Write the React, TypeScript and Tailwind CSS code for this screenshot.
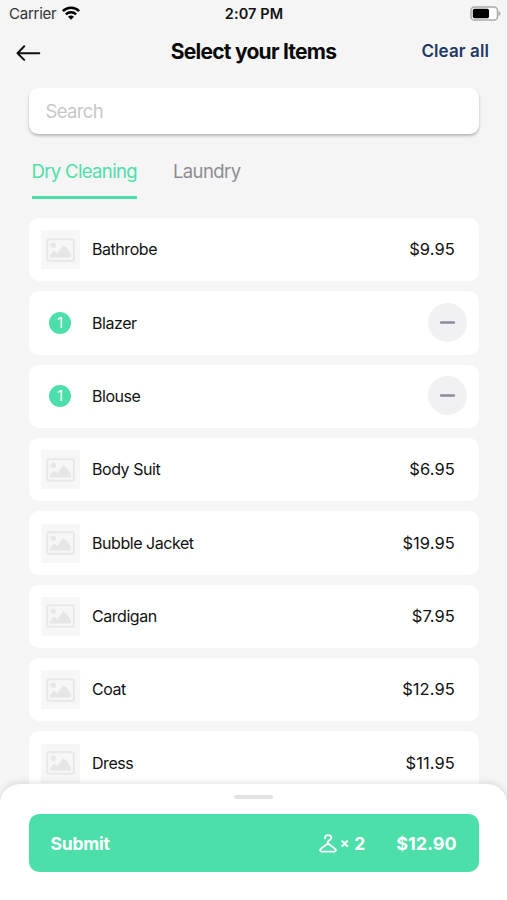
import React from 'react';

type Item = { name: string; price: string; count?: number };

const items: Item[] = [
  { name: 'Bathrobe', price: '$9.95' },
  { name: 'Blazer', price: '$9.95', count: 1 },
  { name: 'Blouse', price: '$6.95', count: 1 },
  { name: 'Body Suit', price: '$6.95' },
  { name: 'Bubble Jacket', price: '$19.95' },
  { name: 'Cardigan', price: '$7.95' },
  { name: 'Coat', price: '$12.95' },
  { name: 'Dress', price: '$11.95' },
];

function WifiIcon() {
  return (
    <svg width="18" height="14" viewBox="0 0 18 14" fill="none" stroke="#000" strokeWidth="2.5" className="-mt-[2px]">
      <path d="M0.9 5.2a11.4 11.4 0 0 1 16.2 0" />
      <path d="M3.9 8.4a7.2 7.2 0 0 1 10.2 0" />
      <path d="M9 13.8 6 10.8a4.2 4.2 0 0 1 6 0Z" fill="#000" stroke="none" />
    </svg>
  );
}

function BatteryIcon() {
  return (
    <svg width="31" height="15" viewBox="0 0 31 15" fill="none" className="-mt-[2px]">
      <rect x="1" y="1" width="26.5" height="13" rx="3.6" fill="#fff" stroke="#a9a9a9" strokeWidth="1.5" />
      <rect x="2.8" y="2.8" width="16.2" height="9.4" rx="1.6" fill="#000" />
      <path d="M28.6 5.2c1.2.4 1.9 1.2 1.9 2.3s-.7 1.9-1.9 2.3Z" fill="#a9a9a9" />
    </svg>
  );
}

function BackArrow() {
  return (
    <svg width="25" height="16" viewBox="0 0 25 16" fill="none" stroke="#111" strokeWidth="2" strokeLinecap="round" strokeLinejoin="round">
      <path d="M23.3 8.3H1.5M8.2 1.3 1.5 8.3l6.7 6.6" />
    </svg>
  );
}

function ImagePlaceholder() {
  return (
    <div className="flex size-[39px] items-center justify-center bg-[#f7f7f7]">
      <svg width="29" height="24" viewBox="0 0 29 24" fill="none">
        <rect x="1.2" y="1.2" width="26.6" height="21.6" rx="1.5" stroke="#e8e8e8" strokeWidth="2" />
        <circle cx="7.3" cy="7.3" r="2.7" fill="#e7e7e7" />
        <path d="M4 19.5V17l4-4.5 3.2 2.8 6-8 3 2L25 16v3.5Z" fill="#e6e6e6" />
      </svg>
    </div>
  );
}

function HangerIcon() {
  return (
    <svg width="18" height="19" viewBox="0 0 18 19" fill="none" stroke="#fff" strokeWidth="1.8" strokeLinecap="round" strokeLinejoin="round">
      <path d="M5.9 4.4C5.9 2.300 7.2 1.1 9.2 1.1s3.200 1.300 3.200 2.700c0 2.300-3.700 2.300-3.700 4.400 0 .7.200 1.100.6 1.500" />
      <path d="M9.1 9.500 2 14.600c-1.500 1.200-1 3 .8 3h12.400c1.800 0 2.300-1.800.8-3Z" />
    </svg>
  );
}

function ItemRow({ item }: { item: Item }) {
  return (
    <li className="flex h-[63.35px] shrink-0 items-center rounded-[10px] bg-white px-3">
      <div className="flex size-[39px] items-center justify-center">
        {item.count ? (
          <span className="flex size-[22px] items-center justify-center rounded-full bg-[#4ddfa9] text-[15px] text-white">
            {item.count}
          </span>
        ) : (
          <ImagePlaceholder />
        )}
      </div>
      <span className="ml-[12.5px] flex-1 pb-px text-base tracking-[-0.45px] text-[#111]">{item.name}</span>
      {item.count ? (
        <button aria-label={'Remove ' + item.name} className="-mt-px flex size-[39px] items-center justify-center rounded-full bg-[#f1f1f3]">
          <svg width="15" height="3" viewBox="0 0 15 3">
            <rect y="0.2" width="15" height="2.6" rx="1" fill="#8d8b98" />
          </svg>
        </button>
      ) : (
        <span className="mr-[11.5px] text-[16.5px] tracking-[0.1px] text-[#111]">{item.price}</span>
      )}
    </li>
  );
}

export default function App() {
  return (
    <div className="relative h-[900px] w-[507px] overflow-hidden bg-[#f5f5f5] font-['Inter',sans-serif]">
      <div className="grid h-7 grid-cols-3 items-center pr-[6px] pl-[9px]">
        <div className="flex items-center gap-[6px]">
          <span className="text-[15px] tracking-[-0.25px] text-[#333]">Carrier</span>
          <WifiIcon />
        </div>
        <span className="-ml-[2px] text-center text-[14.5px] font-semibold tracking-[0.1px] text-[#111]">2:07 PM</span>
        <div className="flex justify-end">
          <BatteryIcon />
        </div>
      </div>

      <header className="grid h-[46px] grid-cols-[1fr_auto_1fr] items-center pr-[18px] pl-[16px]">
        <button aria-label="Back" className="mt-1 justify-self-start">
          <BackArrow />
        </button>
        <h1 className="pt-px pl-[2px] text-[21px] font-bold tracking-[-0.75px] text-[#0a0a0a]">Select your Items</h1>
        <button className="mt-[2px] justify-self-end text-[17px] font-semibold tracking-[0.1px] text-[#1f3864]">Clear all</button>
      </header>

      <div className="mt-[14px] px-[28.5px]">
        <input
          placeholder="Search"
          className="block h-[46px] w-full rounded-[9px] bg-white px-[17px] text-[18.5px] tracking-[-0.65px] shadow-[0_2px_3px_rgba(0,0,0,0.25)] outline-none placeholder:text-[#c7c7c7]"
        />
      </div>

      <nav className="flex h-[65px] items-end gap-9 pl-[31.5px]">
        <button className="border-b-3 border-[#4ddfa9] pb-[13px] text-[18.5px] leading-6 tracking-[-0.65px] text-[#4ddfa9]">
          Dry Cleaning
        </button>
        <button className="border-b-3 border-transparent pb-[13px] text-[18.5px] leading-6 tracking-[-0.6px] text-[#8d8d93]">
          Laundry
        </button>
      </nav>

      <ul className="mt-[19px] flex flex-col gap-[10px] px-[28.5px]">
        {items.map((item) => (
          <ItemRow key={item.name} item={item} />
        ))}
      </ul>

      <section className="absolute inset-x-0 bottom-0 flex h-[116px] flex-col items-center rounded-t-[20px] bg-white px-[28.5px] pt-[11px] shadow-[0_-2px_6px_rgba(0,0,0,0.1)]">
        <div className="h-[4px] w-[39px] rounded-full bg-[#e2e2e2]" />
        <button className="mt-[15px] flex h-[58px] w-full items-center rounded-[10px] bg-[#4ddfa9] px-[22px] text-lg font-bold text-white">
          <span className="flex-1 pt-px text-left text-[17.5px] tracking-[-0.2px]">Submit</span>
          <HangerIcon />
          <span className="ml-[3px] text-sm">×</span>
          <span className="ml-[5px] pt-px text-[17.5px]">2</span>
          <span className="ml-[31px] pt-px tracking-[-0.05px]">$12.90</span>
        </button>
      </section>
    </div>
  );
}
